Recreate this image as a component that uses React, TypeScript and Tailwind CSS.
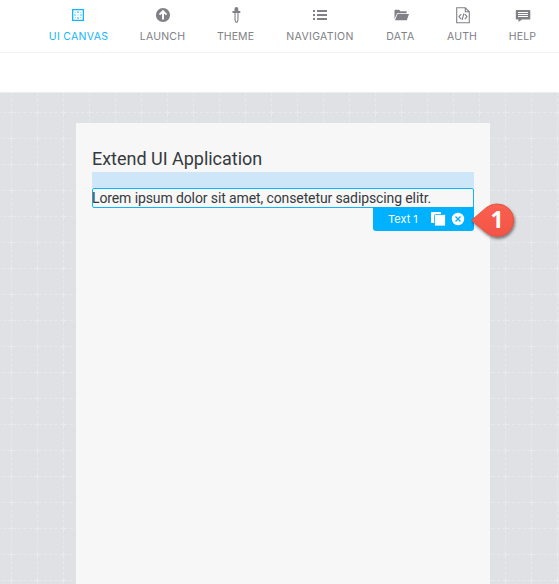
import type { ReactNode } from 'react';

type NavItem = { label: string; width: string; tracking: string; icon: ReactNode; active?: boolean };

const items: NavItem[] = [
  {
    label: 'UI CANVAS',
    width: 'w-[59px]',
    tracking: 'tracking-[0.3px]',
    active: true,
    icon: (
      <svg className="-ml-0.5" width="20" height="20" viewBox="0 0 20 20" fill="currentColor">
        <path fillRule="evenodd" d="M4 4h12v12H4zM5.3 5.3v9.400h9.400V5.3z" />
        <path d="M9.4 6h1.2v2H9.4zM9.4 12h1.200v2H9.4zM6 9.400h2v1.200H6zM12 9.400h2v1.200h-2z" opacity=".8" />
        <path d="M9.400 9.400h1.200v1.200H9.4zM7 7h1v1h-1zM12 7h1v1h-1zM7 12h1v1h-1zM12 12h1v1h-1z" opacity=".5" />
      </svg>
    ),
  },
  {
    label: 'LAUNCH',
    width: 'w-[45px]',
    tracking: 'tracking-[0.2px]',
    icon: (
      <svg width="20" height="20" viewBox="0 0 20 20">
        <circle cx="10" cy="10" r="7.1" fill="currentColor" />
        <path d="M10 14.4V6.8M6.500 9.6l3.5-3.5 3.5 3.5" fill="none" stroke="#fff" strokeWidth="1.9" />
      </svg>
    ),
  },
  {
    label: 'THEME',
    width: 'w-[37px]',
    tracking: 'tracking-[0.1px]',
    icon: (
      <svg width="20" height="20" viewBox="0 0 20 20" fill="currentColor">
        <path d="M8.5 6V3.8Q8.5 2 10.4 2T12.3 3.8V6h2v2.1h-1.8v7.2l-1.1 2.5H9.6l-1.1-2.5V8.1H6.5V6zM9.6 8.1V15l.5 1.6h.7l.6-1.6V8.1z" fillRule="evenodd" />
      </svg>
    ),
  },
  {
    label: 'NAVIGATION',
    width: 'w-[68px]',
    tracking: 'tracking-[0.35px]',
    icon: (
      <svg width="20" height="20" viewBox="0 0 20 20" fill="currentColor">
        <path d="M3 5h2v2H3zM3 9h2v2H3zM3 13h2v2H3zM7 5h10v2H7zM7 9h10v2H7zM7 13h10v2H7z" />
      </svg>
    ),
  },
  {
    label: 'DATA',
    width: 'w-[29px]',
    tracking: 'tracking-[0.5px]',
    icon: (
      <svg width="20" height="20" viewBox="0 0 20 20" fill="currentColor">
        <path d="M3.5 14V5.3l.6-.6h4l1.3 1.5h6.2v2H6z" />
        <path d="M6.5 9H18l-2.2 6.3H4z" />
      </svg>
    ),
  },
  {
    label: 'AUTH',
    width: 'w-[30px]',
    tracking: 'tracking-[0.2px]',
    icon: (
      <svg className="ml-px" width="20" height="20" viewBox="0 0 20 20" fill="none" stroke="currentColor" strokeWidth="1.1">
        <path d="M3.7 2.8h8.6l4 4v11H3.7zM12.3 2.8v4h4" />
        <path d="M8.2 9.2 6 11.6l2.2 2.5M11.8 9.2l2.2 2.4-2.2 2.5M10.9 8.5l-1.8 6.3" />
      </svg>
    ),
  },
  {
    label: 'HELP',
    width: 'w-[27px]',
    tracking: 'tracking-[0.2px]',
    icon: (
      <svg width="20" height="20" viewBox="0 0 20 20">
        <path d="M3.5 5h13q.8 0 .8.8v8q0 .8-.8.8H9l-3.5 2.5v-2.5h-2q-.7 0-.7-.8v-8q0-.8.7-.8z" fill="currentColor" />
        <path d="M5 7.5h10M5 9.5h10M5 11.5h10" stroke="#fff" strokeWidth="1" />
      </svg>
    ),
  },
];

function CanvasGrid() {
  return (
    <svg className="absolute inset-0 h-full w-full" aria-hidden="true">
      <defs>
        <pattern id="grid" x="-2" y="6" width="26" height="26" patternUnits="userSpaceOnUse">
          <path d="M13.5 0v26M0 13.5h26" stroke="#e6e8ea" strokeWidth="1" strokeDasharray="3 2" />
          <path d="M13.5 11v5M11 13.5h5" stroke="#e8eaec" strokeWidth="1" />
        </pattern>
      </defs>
      <rect width="100%" height="100%" fill="url(#grid)" />
    </svg>
  );
}

function Callout() {
  return (
    <div className="absolute top-[73px] left-[92px] h-[48px] w-[56px]">
      <svg className="absolute inset-0" width="56" height="48" viewBox="0 0 56 48">
        <defs>
          <linearGradient id="pin" x1="0" y1="0" x2="0" y2="1">
            <stop offset="0" stopColor="#fb5f50" />
            <stop offset="1" stopColor="#f25546" />
          </linearGradient>
          <filter id="shadow" x="-20%" y="-20%" width="150%" height="160%">
            <feDropShadow dx="1" dy="2" stdDeviation="1.5" floodColor="#000" floodOpacity=".5" />
          </filter>
        </defs>
        <path d="M6.500 21.300 20.500 9.300C25 5.700 29 5 32.500 5a16.200 16.200 0 0 1 0 32.400c-4 0-7.500-1-12-4.300z" fill="url(#pin)" stroke="#dc4b3e" strokeWidth=".8" filter="url(#shadow)" />
      </svg>
      <span className="absolute top-[7px] left-[24px] w-[16px] text-center font-['Open_Sans',sans-serif] text-[23px] leading-[26px] font-bold text-white">1</span>
    </div>
  );
}

export default function App() {
  return (
    <div className="flex h-[584px] w-[559px] flex-col overflow-hidden bg-white font-['Roboto',sans-serif]">
      <nav className="flex h-[53px] shrink-0 gap-8 border-b border-[#f2f2f2] pl-[49px] font-['Inter',sans-serif] text-[10.5px]">
        {items.map((item) => (
          <div key={item.label} className={`flex shrink-0 flex-col items-center pt-[5px] ${item.width} ${item.active ? 'text-[#13b5ff]' : 'text-[#808086]'}`}>
            {item.icon}
            <span className={`mt-1 leading-[15px] whitespace-nowrap ${item.tracking}`}>{item.label}</span>
          </div>
        ))}
      </nav>
      <div className="h-10 shrink-0 border-b border-[#edeef0]" />
      <main className="relative flex-1 bg-[#e0e1e5] pt-[30px] pl-[76px]">
        <CanvasGrid />
        <section className="relative h-[461px] w-[414px] bg-[#f7f7f7] px-4 pt-6">
          <h1 className="h-[25px] text-[18px] leading-[24px] tracking-[-0.02px] whitespace-nowrap text-[#363a3e]">Extend UI Application</h1>
          <div className="h-4 w-[382px] bg-[#cde7f9]" />
          <div className="h-5 w-[382px] rounded-[2px] border border-[#10b4fb] text-[14px] leading-[18px] tracking-[-0.11px] whitespace-nowrap text-[#363a3e]">
            <span className="-ml-px">Lorem ipsum dolor sit amet, consetetur sadipscing elitr.</span>
          </div>
          <div className="relative -mt-px ml-[281px] flex h-[24px] w-[101px] items-center rounded-b-[3px] bg-[#00b1ff] text-white">
            <span className="ml-[15px] w-[42px] font-['Inter',sans-serif] text-[11px] leading-[22px] whitespace-nowrap">Text 1</span>
            <svg width="16" height="16" viewBox="0 0 16 16" fill="none">
              <rect x="1" y="1" width="10" height="11" rx=".7" fill="#fff" />
              <rect x="4.500" y="3.500" width="11" height="11.500" rx="1" fill="#fff" stroke="#00b1ff" strokeWidth=".8" />
            </svg>
            <svg className="ml-[5px]" width="14" height="14" viewBox="0 0 14 14">
              <circle cx="7" cy="7" r="6.200" fill="#fff" />
              <path d="m4.500 4.500 5 5m0-5-5 5" stroke="#00b1ff" strokeWidth="1.300" />
            </svg>
            <div className="absolute -top-[81px] left-0 h-0 w-0">
              <Callout />
            </div>
          </div>
        </section>
      </main>
    </div>
  );
}
